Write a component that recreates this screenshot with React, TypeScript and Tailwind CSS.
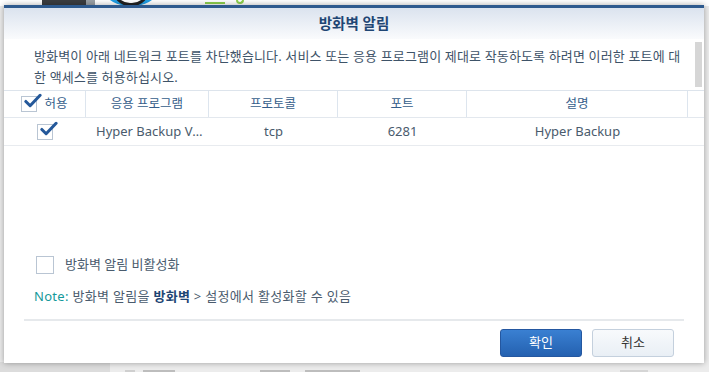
const font = { fontFamily: '"Noto Sans", "Noto Sans CJK KR", sans-serif' };

function CheckMark({ className }: { className?: string }) {
  return (
    <svg viewBox="0 0 20 16" className={className} fill="none">
      <path d="M3 8.5 L7.5 13 L18 2" stroke="#24589a" strokeWidth="3.2" strokeLinecap="round" strokeLinejoin="round" />
    </svg>
  );
}

function Box({ checked, size = "w-[16px] h-[16px]" }: { checked?: boolean; size?: string }) {
  return (
    <span className={`relative inline-block ${size} border border-[#b9c5d3] bg-white shrink-0`}>
      {checked && <CheckMark className="absolute left-[1px] top-[-4px] w-[19px] h-[16px]" />}
    </span>
  );
}

export default function App() {
  const cols = ["w-[82px]", "w-[123px]", "w-[129px]", "w-[129px]", "w-[221px]"];

  return (
    <div className="relative w-[709px] h-[372px] overflow-hidden bg-[#ececec]" style={font}>
      {/* page behind the dialog */}
      <div className="absolute inset-x-0 top-0 h-[6px] bg-white">
        <div className="absolute left-[42px] top-0 w-[44px] h-[6px] bg-[#3b3d40]" />
        <div className="absolute left-[86px] top-0 w-[9px] h-[6px] bg-[#9aa0a6]" />
        <div className="absolute left-[96px] top-[-60px] w-[70px] h-[66px] rounded-full bg-[#1f9de3]" />
        <div className="absolute left-[112px] top-[-30px] w-[38px] h-[36px] rounded-full bg-white border-[3px] border-[#222]" />
        <div className="absolute left-[205px] top-0 w-[20px] h-[4px] border-b-2 border-[#8fd14f]" />
        <div className="absolute left-[236px] top-0 w-[8px] h-[4px] rounded-b-full border-2 border-t-0 border-[#8fd14f]" />
      </div>
      <div className="absolute left-0 bottom-0 w-[110px] h-[10px] bg-[#dcdcdc]" />
      <div className="absolute left-[125px] bottom-0 w-[10px] h-[2px] bg-[#cfcfcf]" />
      <div className="absolute left-[143px] bottom-0 w-[32px] h-[2px] bg-[#bdbdbd]" />
      <div className="absolute left-[260px] bottom-0 w-[30px] h-[2px] bg-[#bdbdbd]" />
      <div className="absolute left-[305px] bottom-0 w-[55px] h-[2px] bg-[#bdbdbd]" />
      <div className="absolute left-[620px] bottom-0 w-[28px] h-[2px] bg-[#d5d5d5]" />

      {/* dialog */}
      <div className="relative ml-[4px] mt-[5px] w-[700px] h-[358px] bg-white border-t-[3px] border-[#2e5a8e] shadow-[0_0_6px_rgba(0,0,0,0.35)] flex flex-col">
        <div className="h-[31px] flex items-center justify-center bg-gradient-to-b from-[#dbe3ee] to-[#fafbfd]">
          <span className="text-[14.5px] font-semibold text-[#1f4674]">방화벽 알림</span>
        </div>

        <div className="relative">
          <div className="absolute right-[2px] top-[3px] w-[7px] h-[45px] bg-[#d6d6d6]" />
          <p className="pl-[30px] pt-[7px] pb-[2px] text-[13px] tracking-[0.15px] leading-[21px] text-[#3e5368] whitespace-nowrap">
            방화벽이 아래 네트워크 포트를 차단했습니다. 서비스 또는 응용 프로그램이 제대로 작동하도록 하려면 이러한 포트에 대
            <br />한 액세스를 허용하십시오.
          </p>
        </div>

        {/* table */}
        <div className="border-t border-[#dde4ec] text-[12.5px]">
          <div className="flex h-[27px] border-b border-[#e3e8ee] text-[#355d8a]">
            <div className={`${cols[0]} flex items-center justify-center gap-[7px] border-r border-[#dde5ee]`}>
              <Box checked />
              <span>허용</span>
            </div>
            <div className={`${cols[1]} flex items-center justify-center border-r border-[#dde5ee]`}>응용 프로그램</div>
            <div className={`${cols[2]} flex items-center justify-center border-r border-[#dde5ee]`}>프로토콜</div>
            <div className={`${cols[3]} flex items-center justify-center border-r border-[#dde5ee]`}>포트</div>
            <div className={`${cols[4]} flex items-center justify-center border-r border-[#dde5ee]`}>설명</div>
            <div className="flex-1" />
          </div>
          <div className="flex h-[28px] border-b border-[#e8ebef] text-[#4a5b6d] text-[13px]">
            <div className={`${cols[0]} flex items-center justify-center`}>
              <Box checked />
            </div>
            <div className={`${cols[1]} flex items-center pl-[10px] pr-[2px] min-w-0`}>
              <span className="truncate">Hyper Backup Vault</span>
            </div>
            <div className={`${cols[2]} flex items-center justify-center`}>tcp</div>
            <div className={`${cols[3]} flex items-center justify-center`}>6281</div>
            <div className={`${cols[4]} flex items-center justify-center`}>Hyper Backup</div>
          </div>
        </div>

        <div className="flex-1" />

        <label className="flex items-center gap-[11px] pl-[32px] text-[13px] text-[#4a5b6d]">
          <Box size="w-[18px] h-[18px]" />
          <span>방화벽 알림 비활성화</span>
        </label>
        <p className="pl-[30px] mt-[12px] text-[13px] tracking-[0.3px] text-[#4a5b6d]">
          <span className="text-[#15999a]">Note:</span> 방화벽 알림을{" "}
          <span className="text-[#1f4674] font-semibold">방화벽</span> &gt; 설정에서 활성화할 수 있음
        </p>

        <div className="mx-[20px] mt-[13px] border-t-2 border-[#e6e9ec]" />

        <div className="flex justify-end gap-[10px] pr-[30px] pt-[8px] pb-[6px]">
          <button className="w-[82px] h-[28px] rounded-[3px] border border-[#2457a0] bg-gradient-to-b from-[#3a80d2] to-[#2461b0] text-white text-[13px]">
            확인
          </button>
          <button className="w-[82px] h-[28px] rounded-[3px] border border-[#c4d0dd] bg-gradient-to-b from-[#f8fafc] to-[#e9eff5] text-[#333] text-[13px]">
            취소
          </button>
        </div>
      </div>
    </div>
  );
}
